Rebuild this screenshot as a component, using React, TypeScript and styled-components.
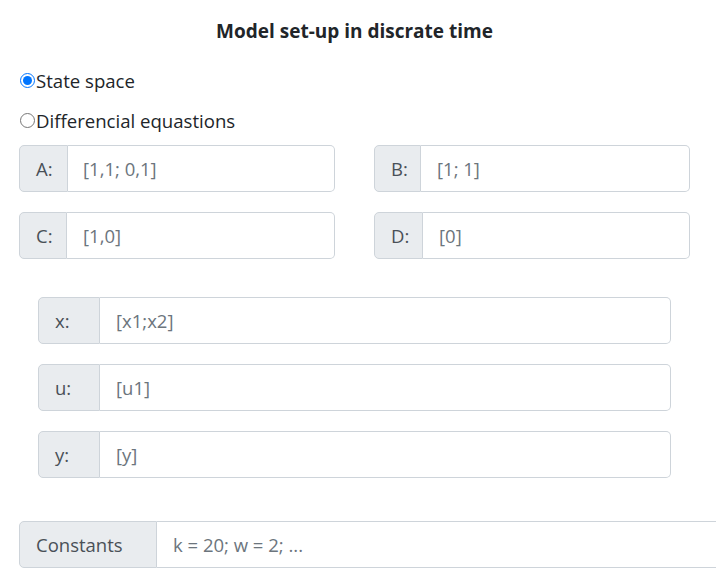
import React from "react";
import styled, { createGlobalStyle } from "styled-components";

const Global = createGlobalStyle`
  html, body { margin: 0; padding: 0; background: #fff; overflow: hidden; }
  body { font-family: "Open Sans", "Noto Sans", sans-serif; color: #212529; }
  * { box-sizing: border-box; }
`;

const Page = styled.div`
  width: 690px;
  padding: 19px 0 0 19px;
`;

const Title = styled.h1`
  margin: 0;
  font-size: 19px;
  line-height: 24px;
  font-weight: 700;
  text-align: center;
`;

const RadioList = styled.div`
  display: flex;
  flex-direction: column;
  margin-top: 17px;
`;

const RadioRow = styled.label`
  display: flex;
  align-items: center;
  height: 40px;
  font-size: 18.6px;
  color: #212529;
  padding-left: 1px;
`;

const Radio = styled.input`
  width: 15px;
  height: 15px;
  margin: 0 1px 0 0;
`;

const Grid = styled.div`
  display: grid;
  grid-template-columns: 316px 316px;
  column-gap: 39px;
  row-gap: 20px;
  margin-top: 5px;
`;

const Stack = styled.div<{ $indent: number; $gap: number; $top: number }>`
  display: flex;
  flex-direction: column;
  gap: ${(p) => p.$gap}px;
  margin-top: ${(p) => p.$top}px;
  padding: 0 ${(p) => p.$indent}px;
`;

const Group = styled.div<{ $wide?: boolean }>`
  display: flex;
  height: 47px;
  width: ${(p) => (p.$wide ? "720px" : "auto")};
`;

const Addon = styled.span<{ $w: number }>`
  display: flex;
  align-items: center;
  flex: 0 0 ${(p) => p.$w}px;
  padding-left: 16px;
  background: #e9ecef;
  border: 1px solid #ced4da;
  border-radius: 5px 0 0 5px;
  font-size: 18.5px;
  color: #495057;
`;

const Field = styled.input<{ $pad: number }>`
  flex: 1;
  min-width: 0;
  border: 1px solid #ced4da;
  border-left: none;
  border-radius: 0 5px 5px 0;
  padding: 0 0 0 ${(p) => p.$pad}px;
  font-family: inherit;
  font-size: 18.5px;
  color: #495057;
  background: #fff;
  outline: none;
  &::placeholder { color: #6c757d; opacity: 1; }
`;

type Item = { label: string; w: number; pad: number; ph: string };

const matrices: Item[] = [
  { label: "A:", w: 49, pad: 15, ph: "[1,1; 0,1]" },
  { label: "B:", w: 47, pad: 16, ph: "[1; 1]" },
  { label: "C:", w: 48, pad: 16, ph: "[1,0]" },
  { label: "D:", w: 49, pad: 16, ph: "[0]" },
];

const vars: Item[] = [
  { label: "x:", w: 62, pad: 16, ph: "[x1;x2]" },
  { label: "u:", w: 62, pad: 16, ph: "[u1]" },
  { label: "y:", w: 62, pad: 16, ph: "[y]" },
];

export default function App() {
  return (
    <>
      <Global />
      <Page>
        <Title>Model set-up in discrate time</Title>
        <RadioList>
          <RadioRow>
            <Radio type="radio" name="mode" defaultChecked />
            State space
          </RadioRow>
          <RadioRow>
            <Radio type="radio" name="mode" />
            Differencial equastions
          </RadioRow>
        </RadioList>
        <Grid>
          {matrices.map((m) => (
            <Group key={m.label}>
              <Addon $w={m.w}>{m.label}</Addon>
              <Field $pad={m.pad} placeholder={m.ph} />
            </Group>
          ))}
        </Grid>
        <Stack $indent={19} $gap={20} $top={38}>
          {vars.map((v) => (
            <Group key={v.label}>
              <Addon $w={v.w}>{v.label}</Addon>
              <Field $pad={v.pad} placeholder={v.ph} />
            </Group>
          ))}
        </Stack>
        <Stack $indent={0} $gap={0} $top={43}>
          <Group $wide>
            <Addon $w={138}>Constants</Addon>
            <Field $pad={16} placeholder="k = 20; w = 2; ..." />
          </Group>
        </Stack>
      </Page>
    </>
  );
}
